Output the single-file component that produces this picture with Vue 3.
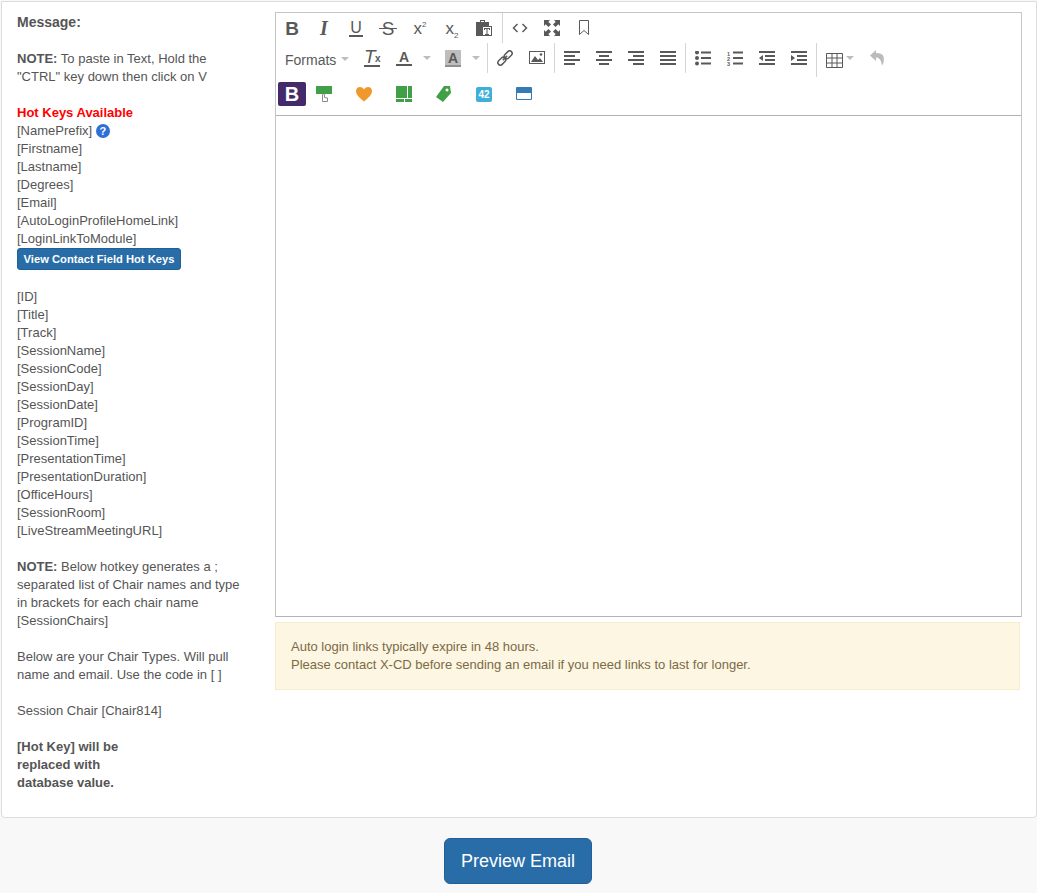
<script setup>
const aligns = [
  'M0 0h16v2H0zM0 4h11v2H0zM0 8h16v2H0zM0 12h11v2H0z',
  'M0 0h16v2H0zM3 4h10v2H3zM0 8h16v2H0zM3 12h10v2H3z',
  'M0 0h16v2H0zM5 4h11v2H5zM0 8h16v2H0zM5 12h11v2H5z',
  'M0 0h16v2H0zM0 4h16v2H0zM0 8h16v2H0zM0 12h16v2H0z'
]
const keysA = ['[Firstname]', '[Lastname]', '[Degrees]', '[Email]', '[AutoLoginProfileHomeLink]', '[LoginLinkToModule]']
const keysB = ['[ID]', '[Title]', '[Track]', '[SessionName]', '[SessionCode]', '[SessionDay]', '[SessionDate]', '[ProgramID]', '[SessionTime]', '[PresentationTime]', '[PresentationDuration]', '[OfficeHours]', '[SessionRoom]', '[LiveStreamMeetingURL]']
</script>

<template>
  <div class="page">
    <section class="panel">
      <aside class="help">
        <p class="para title"><b>Message:</b></p>
        <p class="para"><b>NOTE:</b> To paste in Text, Hold the "CTRL" key down then click on V</p>
        <div class="para">
          <div class="hot">Hot Keys Available</div>
          <div class="keyline">[NamePrefix] <span class="q">?</span></div>
          <div v-for="k in keysA" :key="k">{{ k }}</div>
          <button class="mini">View Contact Field Hot Keys</button>
        </div>
        <div class="para">
          <div v-for="k in keysB" :key="k">{{ k }}</div>
        </div>
        <p class="para"><b>NOTE:</b> Below hotkey generates a ; separated list of Chair names and type in brackets for each chair name<br>[SessionChairs]</p>
        <p class="para">Below are your Chair Types. Will pull name and email. Use the code in [ ]</p>
        <p class="para">Session Chair [Chair814]</p>
        <p class="para last"><b>[Hot Key] will be<br>replaced with<br>database value.</b></p>
      </aside>

      <div class="main">
        <div class="editor">
          <div class="toolbar">
            <div class="row r1">
              <span class="tb"><span class="t-b">B</span></span>
              <span class="tb"><span class="t-i">I</span></span>
              <span class="tb"><span class="t-u">U</span></span>
              <span class="tb"><span class="t-s">S</span></span>
              <span class="tb"><span class="t-x">x<sup>2</sup></span></span>
              <span class="tb"><span class="t-x">x<sub>2</sub></span></span>
              <span class="tb">
                <svg class="ic" viewBox="0 0 16 16"><path d="M0 2h4V0h5v2h4v5H8v9H0z"/><path d="M5 1h3v1H5z" fill="#fff"/><rect x="6.500" y="6.500" width="9" height="9" fill="#fff" stroke="#595959"/><path d="M8 8h6v2h-1V9h-1.500v5H13v1H9v-1h1.500V9H9v1H8z"/></svg>
              </span>
              <i class="sep wide"></i>
              <span class="tb">
                <svg class="ic" viewBox="0 0 16 16"><path d="M5.500 4 1.500 8l4 4M10.500 4l4 4-4 4" fill="none" stroke="#595959" stroke-width="1.500"/></svg>
              </span>
              <span class="tb">
                <svg class="ic" viewBox="0 0 16 16"><path d="M0 0h6L4.300 1.700 7 4.400 4.400 7 1.700 4.300 0 6zM16 0v6l-1.700-1.700L11.600 7 9 4.400l2.700-2.700L10 0zM0 16v-6l1.700 1.700L4.400 9 7 11.600l-2.700 2.700L6 16zM16 16h-6l1.700-1.700L9 11.600 11.600 9l2.700 2.700L16 10z"/></svg>
              </span>
              <span class="tb">
                <svg class="ic" viewBox="0 0 16 16"><path d="M3.500.5h9v14L8 10.500l-4.500 4z" fill="none" stroke="#595959"/></svg>
              </span>
            </div>

            <div class="row r2">
              <span class="formats">Formats<i class="caret"></i></span>
              <span class="tb">
                <span class="t-clear">T<small>x</small></span>
              </span>
              <span class="tb split">
                <span class="t-a">A</span><i class="caret"></i>
              </span>
              <span class="tb split">
                <span class="t-a bg">A</span><i class="caret"></i>
              </span>
              <i class="sep"></i>
              <span class="tb">
                <svg class="ic" viewBox="0 0 16 16"><g transform="rotate(-45 8 8)" fill="none" stroke="#595959" stroke-width="1.500"><rect x="-1" y="5.500" width="9" height="5" rx="2.500"/><rect x="8" y="5.500" width="9" height="5" rx="2.500"/><path d="M5 8h6"/></g></svg>
              </span>
              <span class="tb">
                <svg class="ic" viewBox="0 0 16 16"><rect x=".5" y="1.500" width="15" height="12" fill="none" stroke="#595959"/><path d="M2 12 6 6l3 4 2-2 3 4z"/><circle cx="12" cy="4.500" r="1.300"/></svg>
              </span>
              <i class="sep"></i>
              <span v-for="d in aligns" :key="d" class="tb">
                <svg class="ic al" viewBox="0 0 16 16"><path :d="d"/></svg>
              </span>
              <i class="sep"></i>
              <span class="tb">
                <svg class="ic al" viewBox="0 0 16 16"><circle cx="2" cy="1.500" r="2"/><circle cx="2" cy="7" r="2"/><circle cx="2" cy="12.500" r="2"/><path d="M6 .5h10v2H6zM6 6h10v2H6zM6 11.500h10v2H6z"/></svg>
              </span>
              <span class="tb">
                <svg class="ic al" viewBox="0 0 16 16"><text x="0" y="4.500" class="num">1</text><text x="0" y="9.500" class="num">2</text><text x="0" y="14.500" class="num">3</text><path d="M6 .5h10v2H6zM6 6h10v2H6zM6 11.500h10v2H6z"/></svg>
              </span>
              <span class="tb">
                <svg class="ic al" viewBox="0 0 16 16"><path d="M0 0h16v2H0zM6 4h10v2H6zM6 8h10v2H6zM0 12h16v2H0zM4 4v6L0 7z"/></svg>
              </span>
              <span class="tb">
                <svg class="ic al" viewBox="0 0 16 16"><path d="M0 0h16v2H0zM6 4h10v2H6zM6 8h10v2H6zM0 12h16v2H0zM0 4v6l4-3z"/></svg>
              </span>
              <i class="sep long"></i>
              <span class="tb tablebtn">
                <svg class="ic tbl" viewBox="0 0 17 15"><path d="M.5.500h16v14H.5zM.5 5h16M.5 10h16M6 .5v14M11 .5v14" fill="none" stroke="#595959"/></svg><i class="caret"></i>
              </span>
              <span class="tb">
                <svg class="ic undo" viewBox="0 0 14 16"><path d="M6 0 0 5.500 6 11V7.500c3 0 5 2 6 8 2-3 2.500-7 1-10-1-1.500-3-2.500-7-2.500z" fill="#bbb"/></svg>
              </span>
            </div>

            <div class="row r3">
              <span class="bs">B</span>
              <span class="tb">
                <svg class="ic" viewBox="0 0 16 16"><path d="M0 0h16v8H0z" fill="#41a047"/><path d="M6.500 15.500V9c0-1.300 2-1.300 2 0v2.500l3 .5v3.500z" fill="#fff" stroke="#8a8a8a"/></svg>
              </span>
              <span class="tb">
                <svg class="ic" viewBox="0 0 16 16"><path d="M8 15.500C4 12 0 9 0 5c0-2.500 2-4 4-4 1.800 0 3.200 1 4 2.500C8.800 2 10.200 1 12 1c2 0 4 1.500 4 4 0 4-4 7-8 10.500z" fill="#f0982a"/></svg>
              </span>
              <span class="tb">
                <svg class="ic" viewBox="0 0 16 16"><path d="M0 0h11v12H0zM12 0h4v12h-4zM0 13h8v3H0zM9 13h7v3H9z" fill="#41a047"/></svg>
              </span>
              <span class="tb">
                <svg class="ic" viewBox="0 0 16 16"><path d="M8 0h6l1 7-8 9-7-5zM11 2.500a1.500 1.500 0 1 0 .01 0z" fill="#41a047" fill-rule="evenodd"/></svg>
              </span>
              <span class="tb"><span class="badge">42</span></span>
              <span class="tb">
                <svg class="ic" viewBox="0 0 16 14"><rect width="16" height="13" rx="1" fill="#337ab7"/><rect x="1" y="6" width="14" height="6" fill="#fff"/></svg>
              </span>
            </div>
          </div>
          <div class="area"></div>
        </div>

        <div class="alert">
          Auto login links typically expire in 48 hours.<br>
          Please contact X-CD before sending an email if you need links to last for longer.
        </div>
      </div>
    </section>

    <div class="actions">
      <button class="preview">Preview Email</button>
    </div>
  </div>
</template>

<style>
html, body { margin: 0; background: #f8f8f8; }
</style>

<style scoped>
.page {
  height: 893px;
  box-sizing: border-box;
  padding-top: 1px;
  overflow: hidden;
  background: #f8f8f8;
  font-family: "Liberation Sans", Arial, sans-serif;
  font-size: 13px;
  line-height: 18px;
  color: #555;
}
.panel {
  box-sizing: border-box;
  width: 1036px;
  height: 817px;
  margin-left: 1px;
  background: #fff;
  border: 1px solid #ddd;
  border-radius: 0 0 4px 4px;
  display: flex;
  padding: 10px 14px 0 15px;
}
.help { width: 233px; flex: none; margin-right: 25px; padding-top: 1px; }
.para { margin: 0 0 18px; }
.para.last { margin: 0; }
.title { font-size: 14px; margin-bottom: 19px; }
.hot { color: #f00; font-weight: 700; }
.keyline { height: 18px; }
.q {
  display: inline-block;
  width: 14px;
  height: 14px;
  border-radius: 50%;
  background: #2f6fd6;
  color: #fff;
  font-size: 11px;
  font-weight: 700;
  line-height: 14px;
  text-align: center;
  vertical-align: top;
  margin-top: 2px;
}
.mini {
  display: block;
  box-sizing: border-box;
  width: 164px;
  height: 22px;
  margin: 0;
  padding: 0;
  background: #286da8;
  border: 1px solid #245f94;
  border-radius: 3px;
  color: #fff;
  font: 700 11.200px/20px "Liberation Sans", Arial, sans-serif;
  white-space: nowrap;
}
.main { width: 747px; flex: none; }
.editor {
  box-sizing: border-box;
  width: 747px;
  height: 605px;
  border: 1px solid #c5c5c5;
  border-bottom-color: #b5b5b5;
  display: flex;
  flex-direction: column;
}
.toolbar { height: 102px; flex: none; border-bottom: 1px solid #b1b1b1; box-sizing: content-box; }
.row { display: flex; align-items: center; color: #595959; }
.r1 { height: 30px; }
.r2 { height: 30px; }
.r3 { height: 34px; margin-top: 4px; gap: 8px; padding-left: 2px; }
.tb {
  flex: none;
  width: 32px;
  height: 100%;
  display: flex;
  align-items: center;
  justify-content: center;
  position: relative;
}
.sep { flex: none; width: 1px; align-self: flex-start; height: 30px; margin: 0 1px; background: #d5d5d5; }
.sep.wide { margin-left: 2px; }
.sep.long { height: 34px; }
.ic { width: 16px; height: 16px; fill: #595959; display: block; }
.al { height: 16px; transform: translateY(1px); }
.t-b { font: 700 19px/1 "Liberation Sans", Arial, sans-serif; }
.t-i { font: italic 700 20px/1 "Liberation Serif", serif; }
.t-u { font: 400 16px/16px "Liberation Sans", Arial, sans-serif; border-bottom: 2px solid #595959; padding: 0 1px; height: 15px; line-height: 15px; }
.t-s { position: relative; font: 400 19px/1 "Liberation Sans", Arial, sans-serif; }
.t-s::after { content: ""; position: absolute; left: -3px; right: -3px; top: 9px; height: 1px; background: #595959; }
.t-x { font: 400 17px/1 "Liberation Sans", Arial, sans-serif; }
.t-x sup, .t-x sub { font-size: 8px; line-height: 0; }
.formats { flex: none; width: 80px; height: 100%; box-sizing: border-box; padding: 3px 0 0 9px; white-space: nowrap; display: flex; align-items: center; font-size: 14px; color: #595959; }
.caret {
  display: inline-block;
  flex: none;
  width: 0;
  height: 0;
  margin-left: 5px;
  border-left: 4px solid transparent;
  border-right: 4px solid transparent;
  border-top: 4px solid #bdbdbd;
}
.formats .caret { margin-top: -2px; }
.t-clear {
  position: relative;
  font: italic 400 19px/17px "Liberation Sans", Arial, sans-serif;
  height: 17px;
  width: 16px;
  border-bottom: 2px solid #595959;
  box-sizing: content-box;
  margin-top: -2px;
}
.t-clear small { position: absolute; left: 10px; top: 6px; font: 700 10px/10px "Liberation Sans", Arial, sans-serif; background: #fff; padding: 0 0 0 1px; }
.split { width: 49px; justify-content: flex-start; padding-left: 8px; box-sizing: border-box; }
.split .caret { margin-left: 11px; }
.t-a {
  display: block;
  box-sizing: border-box;
  width: 16px;
  height: 15px;
  margin-top: 1px;
  font: 700 14px/13px "Liberation Sans", Arial, sans-serif;
  text-align: center;
  border-bottom: 2px solid #595959;
}
.t-a.bg { background: #bdbdbd; height: 17px; line-height: 17px; border-bottom-color: #8f8f8f; margin-top: 0; }
.tablebtn { width: 43px; justify-content: flex-start; padding-left: 8px; box-sizing: border-box; }
.tablebtn .caret { margin-left: 3px; }
.tbl { width: 17px; height: 15px; fill: none; flex: none; transform: translateY(2px); }
.undo { width: 14px; }
.bs {
  flex: none;
  width: 28px;
  height: 24px;
  margin-right: -6px;
  border-radius: 2px;
  background: #452a6b;
  color: #fff;
  font: 700 20px/24px "Liberation Sans", Arial, sans-serif;
  text-align: center;
}
.badge {
  width: 16px;
  height: 15px;
  border-radius: 2px;
  background: #3eafd8;
  color: #fff;
  font: 700 10px/15px "Liberation Sans", Arial, sans-serif;
  text-align: center;
}
.num { font: 700 5.500px "Liberation Sans", Arial, sans-serif; fill: #595959; }
.area { flex: 1; background: #fff; }
.alert {
  box-sizing: border-box;
  width: 745px;
  height: 68px;
  margin-top: 5px;
  padding: 15px;
  background: #fdf6e3;
  border: 1px solid #faebcc;
  color: #7b6a45;
  font-size: 13px;
  line-height: 18px;
}
.actions { display: flex; justify-content: center; padding: 20px 1px 0 0; }
.preview {
  box-sizing: border-box;
  width: 148px;
  height: 46px;
  padding: 0;
  background: #286da8;
  border: 1px solid #245f94;
  border-radius: 6px;
  color: #fff;
  font: 400 18px/1 "Liberation Sans", Arial, sans-serif;
}
</style>
